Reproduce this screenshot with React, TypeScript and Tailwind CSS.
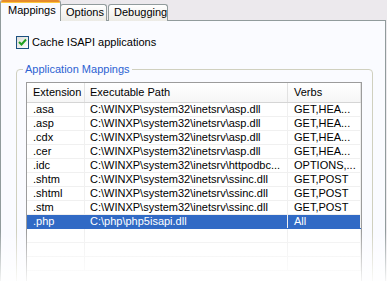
import React from "react";

// ================================================
// Data
// ================================================
const rows = [
  { ext: ".asa", path: "C:\\WINXP\\system32\\inetsrv\\asp.dll", verbs: "GET,HEA..." },
  { ext: ".asp", path: "C:\\WINXP\\system32\\inetsrv\\asp.dll", verbs: "GET,HEA..." },
  { ext: ".cdx", path: "C:\\WINXP\\system32\\inetsrv\\asp.dll", verbs: "GET,HEA..." },
  { ext: ".cer", path: "C:\\WINXP\\system32\\inetsrv\\asp.dll", verbs: "GET,HEA..." },
  { ext: ".idc", path: "C:\\WINXP\\system32\\inetsrv\\httpodbc...", verbs: "OPTIONS,..." },
  { ext: ".shtm", path: "C:\\WINXP\\system32\\inetsrv\\ssinc.dll", verbs: "GET,POST" },
  { ext: ".shtml", path: "C:\\WINXP\\system32\\inetsrv\\ssinc.dll", verbs: "GET,POST" },
  { ext: ".stm", path: "C:\\WINXP\\system32\\inetsrv\\ssinc.dll", verbs: "GET,POST" },
  { ext: ".php", path: "C:\\php\\php5isapi.dll", verbs: "All", selected: true },
  { ext: "", path: "", verbs: "" },
  { ext: "", path: "", verbs: "" },
  { ext: "", path: "", verbs: "" },
];

// ================================================
// Pieces
// ================================================
const Tab: React.FC<{ label: string; active?: boolean; width: string }> = ({
  label,
  active,
  width,
}) =>
  active ? (
    <div
      className={`relative z-10 ${width} h-[21px] -mr-px border-x border-[#919b9c] bg-[#fafbff] rounded-t-[3px] overflow-hidden`}
    >
      <div className="h-[2px] bg-[#e68b2c]" />
      <div className="h-px bg-[#ffc73c]" />
      <div className="pl-[7px] pt-[1px] text-black">{label}</div>
    </div>
  ) : (
    <div
      className={`${width} h-[17px] mr-[1px] border border-b-0 border-[#919b9c] rounded-t-[3px] bg-gradient-to-b from-white to-[#ecebe6] pl-[5px] leading-[15px] text-black`}
    >
      {label}
    </div>
  );

const Checkbox: React.FC = () => (
  <div className="w-[13px] h-[13px] border border-[#1c5180] bg-gradient-to-br from-[#dcdcd7] to-white flex items-center justify-center">
    <svg width="9" height="9" viewBox="0 0 9 9">
      <path d="M1 4 L3.5 6.5 L8 1.5" stroke="#21a121" strokeWidth="2" fill="none" />
    </svg>
  </div>
);

// ================================================
// App
// ================================================
export default function App() {
  return (
    <div
      className="relative w-[387px] h-[281px] overflow-hidden bg-[#ece9ed] text-[11px] leading-[13px]"
      style={{ fontFamily: '"Liberation Sans", Arial, sans-serif' }}
    >
      {/* Tab strip */}
      <div className="flex items-end h-[21px]">
        <Tab label="Mappings" active width="w-[61px]" />
        <Tab label="Options" width="w-[47px]" />
        <Tab label="Debugging" width="w-[60px]" />
      </div>

      {/* Tab page */}
      <div className="-mt-px w-[386px] h-[270px] border border-[#919b9c] bg-[#fafbff] pl-[15px] pr-[12px] pt-[15px]">
        <div className="flex items-center gap-[2px] h-[13px]">
          <Checkbox />
          <span className="text-black ml-[1px]">Cache ISAPI applications</span>
        </div>

        <fieldset className="mt-[14px] h-[260px] border border-[#d0d0bf] rounded-[4px] px-[9px] pt-[6px]">
          <legend className="-ml-[3px] px-[2px] text-[#2c62d2]">Application Mappings</legend>

          <div className="w-[336px] h-[220px] border border-[#9c9c9c] bg-white">
            {/* Header */}
            <div className="flex h-[20px] border-b border-[#d5d5d5] bg-gradient-to-b from-white to-[#f6f6f6]">
              <div className="w-[58px] pl-[6px] border-r border-[#e2e2e2] flex items-center">Extension</div>
              <div className="w-[203px] pl-[5px] border-r border-[#e2e2e2] flex items-center">Executable Path</div>
              <div className="w-[73px] pl-[6px] border-r border-[#e2e2e2] flex items-center">Verbs</div>
            </div>

            {/* Rows */}
            {rows.map((r, i) => (
              <div
                key={i}
                className={`flex h-[14px] border-b ${
                  r.selected ? "bg-[#316ac5] text-white border-[#316ac5]" : "text-black border-[#f0f0f0]"
                }`}
              >
                <div className={`w-[58px] pl-[6px] whitespace-nowrap overflow-hidden border-r ${r.selected ? "border-[#316ac5]" : "border-[#f0f0f0]"}`}>
                  {r.ext}
                </div>
                <div className="w-[203px] pl-[5px] whitespace-nowrap overflow-hidden border-r border-[#f0f0f0]">
                  {r.path}
                </div>
                <div className="w-[73px] pl-[6px] whitespace-nowrap overflow-hidden border-r border-[#f0f0f0]">
                  {r.verbs}
                </div>
              </div>
            ))}
          </div>
        </fieldset>
      </div>

      {/* Bottom fade */}
      <div className="pointer-events-none absolute inset-x-0 bottom-0 h-[50px] bg-gradient-to-b from-white/0 to-white/90" />
    </div>
  );
}
